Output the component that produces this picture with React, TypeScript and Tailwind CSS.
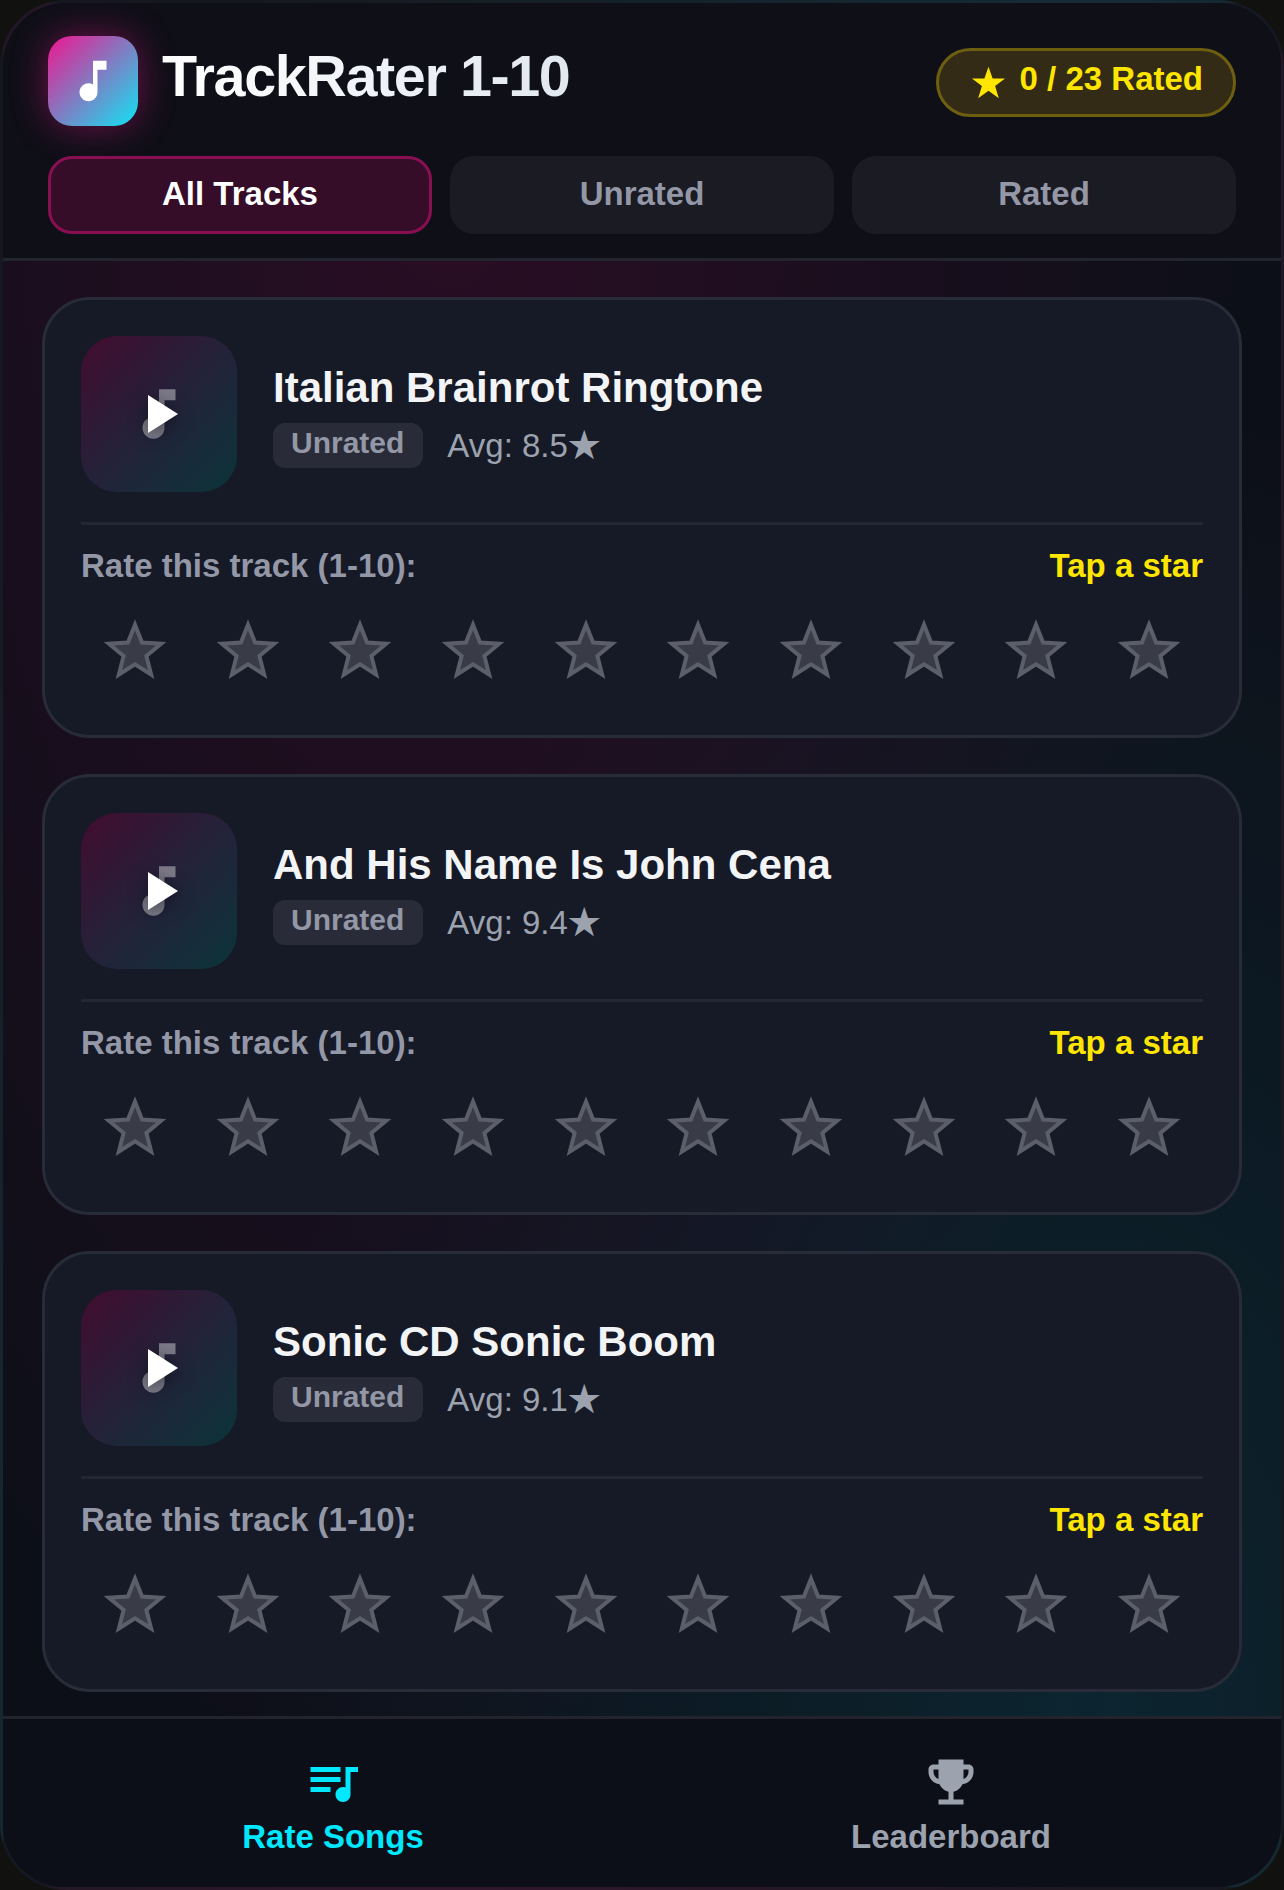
import React from 'react';

const tracks = [
  { id: 1, title: 'Italian Brainrot Ringtone', avg: '8.5' },
  { id: 2, title: 'And His Name Is John Cena', avg: '9.4' },
  { id: 3, title: 'Sonic CD Sonic Boom', avg: '9.1' },
];

const tabs = ['All Tracks', 'Unrated', 'Rated'];

function NoteIcon({ className }: { className?: string }) {
  return (
    <svg viewBox="0 0 24 24" fill="currentColor" className={className}>
      <path d="M12 3v10.55c-.59-.34-1.27-.55-2-.55-2.21 0-4 1.79-4 4s1.79 4 4 4 4-1.79 4-4V7h4V3h-6z" />
    </svg>
  );
}

function RateStar() {
  return (
    <svg viewBox="0 0 64 61" className="h-[61px] w-[64px] shrink-0">
      <path
        d="M32 5.8 L39.05 23.6 L58.15 24.8 L43.4 37 L48.16 55.55 L32 45.3 L15.84 55.55 L20.6 37 L5.85 24.8 L24.95 23.6 Z"
        fill="#393c47"
        stroke="#5c5f6a"
        strokeWidth="4"
        strokeMiterlimit="10"
      />
    </svg>
  );
}

function TrackCard({ title, avg }: { title: string; avg: string }) {
  return (
    <div className="rounded-[48px] border-[3px] border-[#282b38] bg-[#161926] p-[36px]">
      <div className="flex items-center gap-[36px] pb-[30px]">
        <div className="relative flex h-[156px] w-[156px] shrink-0 items-center justify-center rounded-[36px] bg-[linear-gradient(135deg,#420c2e,#24223a_50%,#0b3439)]">
          <NoteIcon className="h-[66px] w-[66px] text-white/40" />
          <svg viewBox="0 0 30 38" className="absolute left-[67px] top-[59px] h-[38px] w-[30px] drop-shadow-[0_3px_9px_rgba(0,0,0,0.5)]">
            <path d="M0 0 L30 19 L0 38 Z" fill="#ffffff" />
          </svg>
        </div>
        <div className="min-w-0 flex-1 pt-[4px]">
          <h3 className="text-[42px] font-bold leading-[47px] text-[#f3f4f6]">{title}</h3>
          <div className="mt-[11px] flex items-center gap-[24px]">
            <span className="rounded-[12px] bg-[#292c38] pb-[6px] pl-[18px] pr-[19px] text-[30px] font-bold leading-[39px] text-[#9397a6]">
              Unrated
            </span>
            <span className="pb-[2px] text-[33px] leading-[43px] text-[#9ca3af]">
              Avg: {avg}
              <span className="font-['Noto_Sans_CJK_JP',sans-serif]">★</span>
            </span>
          </div>
        </div>
      </div>
      <div className="border-t-[3px] border-[#232633] pt-[20px]">
        <div className="flex items-center justify-between">
          <span className="text-[33px] font-bold leading-[42px] text-[#9397a6]">Rate this track (1-10):</span>
          <span className="text-[33px] font-bold leading-[42px] text-[#ffe600]">Tap a star</span>
        </div>
        <div className="mt-[32px] flex justify-between px-[22px] pb-[19px]">
          {Array.from({ length: 10 }).map((_, i) => (
            <RateStar key={i} />
          ))}
        </div>
      </div>
    </div>
  );
}

export default function App() {
  return (
    <div className="h-[1890px] w-[1284px] overflow-hidden bg-[#111110] font-['Liberation_Sans',Arial,sans-serif]">
      <div className="flex h-full flex-col overflow-hidden rounded-[66px] border-[3px] border-white/[0.04] bg-[#0d0f18] bg-[radial-gradient(ellipse_at_35%_5%,rgba(255,0,128,0.12),transparent_68%),radial-gradient(ellipse_at_85%_90%,rgba(0,229,255,0.1),transparent_55%)]">
        <header className="border-b-[3px] border-[#22242f] bg-[#0f0f18] px-[45px] pb-[24px] pt-[33px]">
          <div className="flex items-start justify-between">
            <div className="flex items-start gap-[24px]">
              <div className="flex h-[90px] w-[90px] items-center justify-center rounded-[24px] bg-[linear-gradient(135deg,#f0158f,#10e5f5)] shadow-[0_0_36px_rgba(255,20,147,0.4)]">
                <NoteIcon className="h-[54px] w-[54px] text-white" />
              </div>
              <h1 className="h-[82px] bg-gradient-to-r from-white to-[#e2e8f0] bg-clip-text text-[57.6px] font-bold leading-[80px] tracking-[-1.44px] text-transparent">
                TrackRater 1-10
              </h1>
            </div>
            <div className="mt-[12px] flex h-[69px] items-center gap-[15px] rounded-full border-[3px] border-[#6e5e10] bg-[#332b16] pl-[33px] pr-[30px]">
              <svg viewBox="0 0 24 24" className="h-[33px] w-[33px]" fill="#ffe600">
                <path d="M12 0.5 L15 9 L24 9 L16.8 14.5 L19.5 23.5 L12 18 L4.5 23.5 L7.2 14.5 L0 9 L9 9 Z" />
              </svg>
              <span className="pb-[8px] text-[33px] font-bold text-[#ffe600]">0 / 23 Rated</span>
            </div>
          </div>
          <div className="mt-[30px] grid grid-cols-3 gap-[18px]">
            {tabs.map((tab, i) => (
              <button
                key={tab}
                className={
                  i === 0
                    ? 'h-[78px] rounded-[24px] border-[3px] border-[#8a0f52] bg-[#360d28] pb-[2px] text-[33px] font-bold text-white'
                    : 'h-[78px] rounded-[24px] bg-[#1b1b24] pb-[2px] text-[33px] font-bold text-[#9397a6]'
                }
              >
                {tab}
              </button>
            ))}
          </div>
        </header>

        <main className="flex flex-1 flex-col gap-[36px] px-[39px] pt-[36px]">
          {tracks.map((track) => (
            <TrackCard key={track.id} title={track.title} avg={track.avg} />
          ))}
        </main>

        <nav className="grid h-[171px] grid-cols-2 border-t-[3px] border-[#22232d] bg-[#0d0f18] px-[21px] pt-[33px]">
          <div className="flex flex-col items-center">
            <svg viewBox="0 0 24 24" fill="#00e8ff" className="h-[60px] w-[60px]">
              <path d="M15 6H3v2h12V6zm0 4H3v2h12v-2zM3 16h8v-2H3v2zM17 6v8.18c-.31-.11-.65-.18-1-.18-1.66 0-3 1.34-3 3s1.34 3 3 3 3-1.34 3-3V8h3V6h-5z" />
            </svg>
            <span className="mt-[4px] text-[33px] font-bold leading-[42px] text-[#00e8ff]">Rate Songs</span>
          </div>
          <div className="flex flex-col items-center">
            <svg viewBox="0 0 24 24" fill="#9ca3af" className="h-[60px] w-[60px]">
              <path d="M19 5h-2V3H7v2H5c-1.1 0-2 .9-2 2v1c0 2.55 1.92 4.63 4.39 4.94.63 1.5 1.98 2.63 3.61 2.96V19H7v2h10v-2h-4v-3.1c1.63-.33 2.98-1.46 3.61-2.96C19.08 12.63 21 10.55 21 8V7c0-1.1-.9-2-2-2zM5 8V7h2v3.82C5.84 10.4 5 9.3 5 8zm14 0c0 1.3-.84 2.4-2 2.82V7h2v1z" />
            </svg>
            <span className="mt-[4px] text-[33px] font-bold leading-[42px] text-[#9ca3af]">Leaderboard</span>
          </div>
        </nav>
      </div>
    </div>
  );
}
